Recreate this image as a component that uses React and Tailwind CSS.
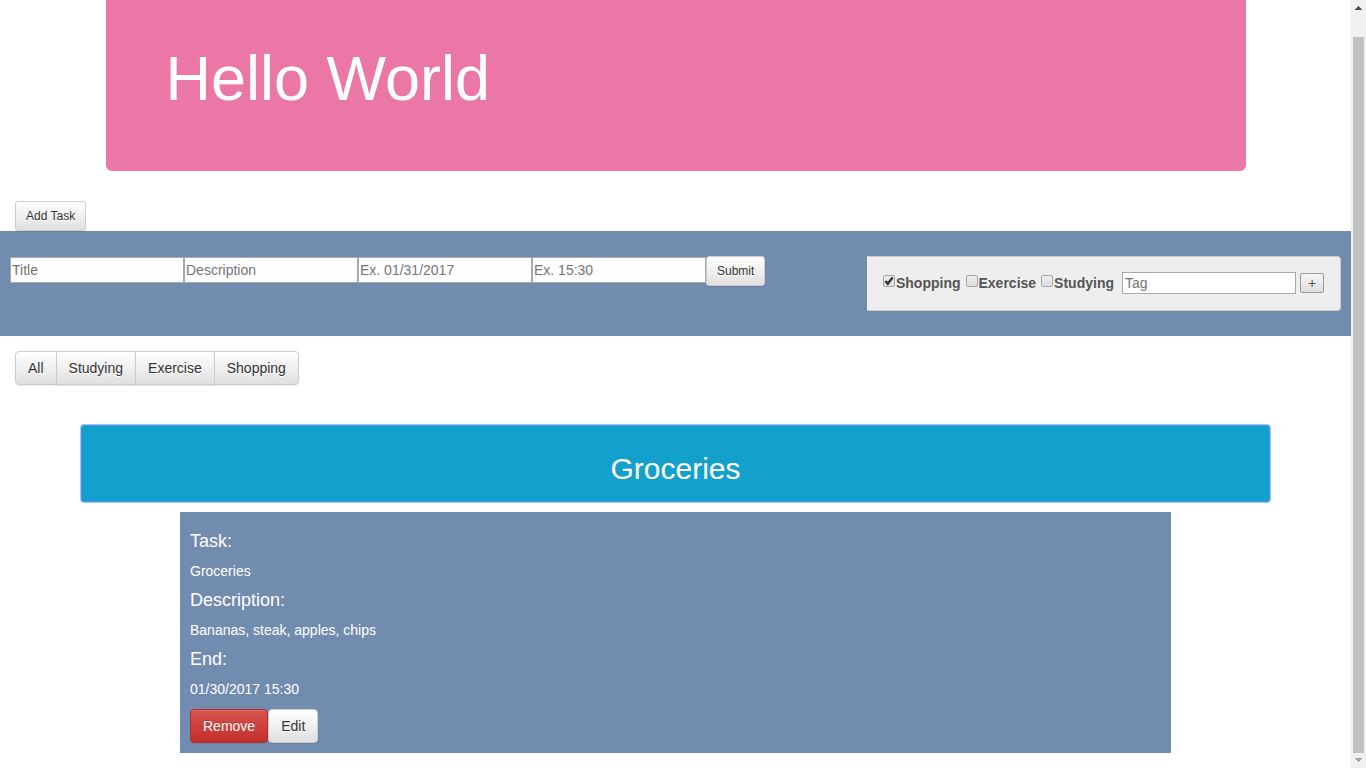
import { useState } from 'react';

const grayButton =
  'border border-[#ccc] bg-linear-to-b from-white to-[#e0e0e0] text-[#333] [text-shadow:0_1px_0_#fff] shadow-[inset_0_1px_0_rgba(255,255,255,0.15),0_1px_1px_rgba(0,0,0,0.075)]';

const fieldBase =
  'w-[174px] border border-[#a9a9a9] bg-white text-[14px] text-black placeholder:text-[#757575] placeholder:opacity-100';

const fields = ['Title', 'Description', 'Ex. 01/31/2017', 'Ex. 15:30'];
const filters = ['All', 'Studying', 'Exercise', 'Shopping'];
const details = [
  ['Task:', 'Groceries'],
  ['Description:', 'Bananas, steak, apples, chips'],
  ['End:', '01/30/2017 15:30'],
];

function TagCheck({ name, checked, onChange }) {
  return (
    <label className="flex items-start">
      <span className="relative mt-[2px] block h-3 w-[13px]">
        <input
          type="checkbox"
          checked={checked}
          onChange={onChange}
          className="block size-3 appearance-none rounded-[2px] border border-[#a6a6a6] bg-linear-to-b from-[#eee] to-[#dcdcdc]"
        />
        {checked && (
          <svg viewBox="0 0 12 12" className="pointer-events-none absolute inset-0 size-3" aria-hidden="true">
            <path d="M2.4 6.2 4.8 8.7 9.6 2.6" fill="none" stroke="#333" strokeWidth="2.4" />
          </svg>
        )}
      </span>
      <span>{name}</span>
    </label>
  );
}

function Scrollbar() {
  return (
    <div className="flex w-[15px] shrink-0 flex-col items-center bg-[#f1f1f1]" aria-hidden="true">
      <svg viewBox="0 0 15 37" className="h-[37px] w-[15px]" shapeRendering="crispEdges">
        <path d="M7 6h1v1h1v1h1v1h1v1H4V9h1V8h1V7h1z" fill="#505050" />
      </svg>
      <div className="w-[11px] grow bg-[#c1c1c1]" />
      <svg viewBox="0 0 15 15" className="size-[15px]" shapeRendering="crispEdges">
        <path d="M4 5h7v1h-1v1H9v1H8v1H7V8H6V7H5V6H4z" fill="#a3a3a3" />
      </svg>
    </div>
  );
}

export default function App() {
  const [tags, setTags] = useState({ Shopping: true, Exercise: false, Studying: false });

  return (
    <div className="flex min-h-screen bg-white font-['Liberation_Sans',Arial,sans-serif] text-[14px] leading-5 text-[#333]">
      <main className="min-w-0 flex-1">
        <header className="mx-auto max-w-[1140px] rounded-b-[6px] bg-[#eb77a6] px-[60px] pt-11 pb-[58px]">
          <h1 className="text-[63px] leading-[69px] text-white">Hello World</h1>
        </header>

        <div className="mt-[30px] flex px-[15px]">
          <button type="button" className={`h-[30px] rounded-[3px] px-[10px] text-[12px] leading-[18px] ${grayButton}`}>
            Add Task
          </button>
        </div>

        <section className="flex items-start justify-between bg-[#728cb0] px-[10px] py-[25px]">
          <form className="flex items-start" onSubmit={(e) => e.preventDefault()}>
            <div className="flex pt-px">
              {fields.map((f) => (
                <input key={f} type="text" aria-label={f} placeholder={f} className={`h-[26px] px-px ${fieldBase}`} />
              ))}
            </div>
            <button type="submit" className={`h-[30px] rounded-[3px] px-[10px] text-[12px] leading-[18px] ${grayButton}`}>
              Submit
            </button>
          </form>
          <form
            className="flex items-center rounded-r-[4px] border border-l-0 border-[#ccc] bg-[#eee] p-4 pt-[15px] font-bold text-[#555]"
            onSubmit={(e) => e.preventDefault()}
          >
            <div className="mr-2 flex gap-[5px]">
              {Object.keys(tags).map((t) => (
                <TagCheck
                  key={t}
                  name={t}
                  checked={tags[t]}
                  onChange={() => setTags({ ...tags, [t]: !tags[t] })}
                />
              ))}
            </div>
            <input type="text" aria-label="Tag" placeholder="Tag" className={`mr-1 h-[22px] px-[2px] font-normal ${fieldBase}`} />
            <button
              type="submit"
              className="h-5 w-6 rounded-[2px] border border-[#999] bg-linear-to-b from-[#f6f6f6] to-[#dedede] text-[14px] leading-[18px] font-normal"
            >
              +
            </button>
          </form>
        </section>

        <nav className="mt-[15px] flex px-[15px]">
          {filters.map((f) => (
            <button
              key={f}
              type="button"
              className={`-ml-px h-[34px] px-3 first:ml-0 first:rounded-l-[4px] last:rounded-r-[4px] ${grayButton}`}
            >
              {f}
            </button>
          ))}
        </nav>

        <section className="mt-[39px] px-20">
          <button
            type="button"
            className="block h-[79px] w-full rounded-[4px] border border-[#a3c8fb] bg-[#14a0cd] pt-[9px] text-[30px] leading-[33px] text-white shadow-[inset_0_0_0_1px_#3c98e0]"
          >
            Groceries
          </button>
          <article className="mx-[100px] mt-[9px] bg-[#728cb0] p-[10px] text-white">
            {details.map(([label, value]) => (
              <div key={label} className="pt-[10px]">
                <h4 className="text-[18px] leading-[19px]">{label}</h4>
                <p className="mt-[10px]">{value}</p>
              </div>
            ))}
            <div className="mt-[10px] flex">
              <button
                type="button"
                className="h-[34px] rounded-[4px] border border-[#b92c28] bg-linear-to-b from-[#d9534f] to-[#c12e2a] px-3 text-white [text-shadow:0_-1px_0_rgba(0,0,0,0.2)] shadow-[inset_0_1px_0_rgba(255,255,255,0.15),0_1px_1px_rgba(0,0,0,0.075)]"
              >
                Remove
              </button>
              <button type="button" className={`h-[34px] rounded-[4px] px-3 ${grayButton}`}>
                Edit
              </button>
            </div>
          </article>
        </section>
      </main>
      <Scrollbar />
    </div>
  );
}
